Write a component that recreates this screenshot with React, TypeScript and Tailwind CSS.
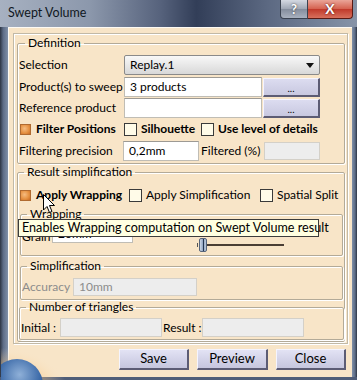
import React from "react";

const beige = "bg-[#f8e5c8]";

function Box({ checked }: { checked?: boolean }) {
  if (checked) {
    return (
      <span className="inline-block w-[11px] h-[11px] shrink-0 border border-[#b06a30] bg-[radial-gradient(circle_at_40%_40%,#f6bc80_0%,#e59040_60%,#c86a24_100%)]" />
    );
  }
  return <span className="inline-block w-[13px] h-[13px] shrink-0 border border-[#3a3a3a] bg-[#fffbe8]" />;
}

function Group({
  title,
  className,
  legendClass,
  children,
}: {
  title: string;
  className?: string;
  legendClass?: string;
  children: React.ReactNode;
}) {
  return (
    <fieldset
      className={
        "border border-[#b3aa98] shadow-[inset_1px_1px_0_#ffffff,1px_1px_0_#ffffff] rounded-[2px] " +
        (className || "")
      }
    >
      <legend className={"px-[3px] leading-[14px] text-[12px] text-black " + (legendClass || "ml-[6px]")}>
        {title}
      </legend>
      {children}
    </fieldset>
  );
}

function Input({ w, value, disabled, h = "h-[20px]" }: { w: string; value?: string; disabled?: boolean; h?: string }) {
  return (
    <div
      className={
        w +
        " " +
        h +
        " shrink-0 flex items-center pl-[5px] border " +
        (disabled
          ? "bg-[#ededed] border-[#d4d0c8] text-[#8c8c8c]"
          : "bg-white border-[#c0bdb5] border-t-[#9d9a94] text-black")
      }
    >
      {value}
    </div>
  );
}

function DotsButton() {
  return (
    <div className="ml-[1px] w-[57px] h-[19px] shrink-0 flex items-center justify-center bg-[linear-gradient(#dcdcf0,#c8c8e0)] border border-[#f4f4ff] border-r-[#5c5c74] border-b-[#5c5c74] border-r-2 border-b-2 text-[10px] leading-none pt-[3px]">
      ...
    </div>
  );
}

function BigButton({ label, w }: { label: string; w: string }) {
  return (
    <div
      className={
        w +
        " h-[21px] flex items-center justify-center bg-[linear-gradient(#e2e2f4,#c6c6de)] border border-[#f4f4ff] border-r-[#5c5c74] border-b-[#5c5c74] border-r-2 border-b-2 text-[13px]"
      }
    >
      {label}
    </div>
  );
}

export default function App() {
  return (
    <div className="w-[357px] h-[380px] relative overflow-hidden font-['Lato',sans-serif] text-[12px] text-black bg-[#4f5d78]">
      {/* Title bar */}
      <div className="h-[27px] flex items-start bg-[linear-gradient(90deg,#a7b1c1_0%,#8c98ac_25%,#56627c_45%,#323e58_55%,#5c6982_75%,#8794a8_100%)]">
        <div className="pl-[8px] pt-[5px] text-[12.5px] leading-[16px] text-[#101822]">Swept Volume</div>
        <div className="ml-auto mr-[4px] flex">
          <div className="w-[28px] h-[19px] flex items-center justify-center rounded-bl-[4px] border border-[#3a4250] border-t-0 bg-[linear-gradient(#d4d9e2,#9ea6b4_50%,#848d9d_51%,#a9b1bf)] text-white font-bold text-[13px] leading-none [text-shadow:0_0_2px_#333]">
            ?
          </div>
          <div className="w-[45px] h-[19px] flex items-center justify-center rounded-br-[4px] border border-[#5a1a14] border-t-0 border-l-0 bg-[linear-gradient(#eaa598,#d4604e_50%,#c0392a_51%,#d8705c)] text-white font-bold text-[14px] leading-none [text-shadow:0_0_2px_#400]">
            X
          </div>
        </div>
      </div>

      <div className="flex h-[350px]">
        <div className="w-[8px] bg-[linear-gradient(90deg,#2c3442,#5d6c86_40%,#8090a8)]" />
        <div className={"w-[344px] relative border-l border-t border-[#fdfaf4] " + beige}>
          {/* globe logo */}
          <div className="absolute left-[-8px] bottom-[-6px] w-[70px] h-[50px] pointer-events-none">
            <svg width="70" height="50" viewBox="0 0 70 50">
              <defs>
                <radialGradient id="glow" cx="0.3" cy="0.8" r="0.7">
                  <stop offset="0" stopColor="#f5a640" stopOpacity="0.9" />
                  <stop offset="0.6" stopColor="#f8c27a" stopOpacity="0.5" />
                  <stop offset="1" stopColor="#f8e5c8" stopOpacity="0" />
                </radialGradient>
                <radialGradient id="globe" cx="0.55" cy="0.3" r="0.8">
                  <stop offset="0" stopColor="#8fb0d8" />
                  <stop offset="0.5" stopColor="#3c6aa8" />
                  <stop offset="1" stopColor="#13305c" />
                </radialGradient>
              </defs>
              <ellipse cx="22" cy="42" rx="46" ry="34" fill="url(#glow)" />
              <circle cx="16" cy="52" r="26" fill="url(#globe)" />
            </svg>
          </div>

          {/* outer panel */}
          <div className="relative ml-[4px] mt-[5px] w-[335px] h-[311px] border border-[#c2b9a6] shadow-[inset_1px_1px_0_#ffffff,1px_1px_0_#ffffff] pl-[3px]">
            <Group title="Definition" className="mt-[2px] w-[328px] pb-[2px] pl-[1px]">
              <div className="flex items-center h-[20px] mt-[5px]">
                <div className="w-[105px] shrink-0">Selection</div>
                <div className="w-[196px] h-[20px] flex items-center pl-[5px] pr-[5px] rounded-[2px] border border-[#8a8a8a] bg-[linear-gradient(#f8f8f8,#e8e8e8_50%,#d8d8d8)]">
                  <span>Replay.1</span>
                  <svg className="ml-auto" width="8" height="5" viewBox="0 0 8 5">
                    <path d="M0 0 L8 0 L4 5 Z" fill="#111" />
                  </svg>
                </div>
              </div>
              <div className="flex items-center h-[20px] mt-[2px]">
                <div className="w-[105px] shrink-0 whitespace-nowrap">Product(s) to sweep</div>
                <Input w="w-[138px]" value="3 products" />
                <DotsButton />
              </div>
              <div className="flex items-center h-[20px] mt-[1px]">
                <div className="w-[105px] shrink-0 whitespace-nowrap">Reference product</div>
                <Input w="w-[138px]" />
                <DotsButton />
              </div>
              <div className="flex items-center h-[16px] mt-[3px] font-bold">
                <div className="w-[105px] shrink-0 flex items-center pl-[1px]">
                  <Box checked />
                  <span className="ml-[5px]">Filter Positions</span>
                </div>
                <div className="w-[77px] shrink-0 flex items-center">
                  <Box />
                  <span className="ml-[4px]">Silhouette</span>
                </div>
                <div className="flex items-center">
                  <Box />
                  <span className="ml-[4px]">Use level of details</span>
                </div>
              </div>
              <div className="flex items-center h-[20px] mt-[4px]">
                <div className="w-[104px] shrink-0">Filtering precision</div>
                <Input w="w-[76px]" value="0,2mm" />
                <div className="w-[65px] shrink-0 pl-[2px]">Filtered (%)</div>
                <Input w="w-[56px]" h="h-[18px]" disabled />
              </div>
            </Group>

            <Group title="Result simplification" className="mt-[1px] w-[328px] pb-[1px]">
              <div className="flex items-center h-[16px] mt-[8px] pl-[2px]">
                <div className="w-[109px] shrink-0 flex items-center font-bold">
                  <Box checked />
                  <span className="ml-[5px]">Apply Wrapping</span>
                </div>
                <div className="w-[131px] shrink-0 flex items-center">
                  <Box />
                  <span className="ml-[4px]">Apply Simplification</span>
                </div>
                <div className="flex items-center">
                  <Box />
                  <span className="ml-[4px]">Spatial Split</span>
                </div>
              </div>

              <Group title="Wrapping" className="ml-[2px] mt-[4px] w-[323px] pb-[1px]" legendClass="ml-[6px]">
                <div className="flex items-start h-[32px] mt-[1px]">
                  <div className="w-[31px] shrink-0 pl-[1px] mt-[6px]">Grain</div>
                  <div className="mt-[3px]">
                    <Input w="w-[81px]" h="h-[18px]" value="20mm" />
                  </div>
                  <div className="ml-[3px] flex flex-col">
                    <div className="mt-[4px] leading-[14px]">Thickness ratio 0.20</div>
                    <div className="ml-[61px] mt-[-2px] flex items-center h-[14px]">
                      <span className="w-[1px] h-[4px] bg-[#555] mr-[1px]" />
                      <span className="w-[8px] h-[14px] rounded-[2px] border border-[#56657c] bg-[linear-gradient(90deg,#d0dae8,#8ea2c0_50%,#b8c6da)] flex justify-center">
                        <span className="w-[1px] h-full bg-[#243650]" />
                      </span>
                      <span className="w-[77px] h-[2px] bg-[#4a3e34]" />
                    </div>
                  </div>
                </div>
              </Group>

              <Group title="Simplification" className="ml-[2px] mt-[3px] w-[323px] pb-[3px]" legendClass="ml-[6px]">
                <div className="flex items-center h-[18px] mt-[5px]">
                  <div className="w-[52px] shrink-0 pl-[1px] text-[#8c8c8c]">Accuracy</div>
                  <Input w="w-[124px]" h="h-[18px]" value="10mm" disabled />
                </div>
              </Group>

              <Group title="Number of triangles" className="ml-[1px] w-[325px] pb-[2px]" legendClass="ml-[6px]">
                <div className="flex items-center h-[19px] mt-[4px]">
                  <div className="w-[40px] shrink-0 pl-[1px]">Initial :</div>
                  <Input w="w-[102px]" h="h-[19px]" disabled />
                  <div className="w-[40px] shrink-0 pl-[1px]">Result :</div>
                  <Input w="w-[102px]" h="h-[19px]" disabled />
                </div>
              </Group>
            </Group>
          </div>

          {/* Bottom buttons */}
          <div className="relative flex justify-end gap-[8px] pr-[6px] mt-[5px]">
            <BigButton label="Save" w="w-[70px]" />
            <BigButton label="Preview" w="w-[71px]" />
            <BigButton label="Close" w="w-[70px]" />
          </div>
        </div>
        <div className="w-[5px] bg-[linear-gradient(90deg,#8090a8,#5d6c86_60%,#2c3442)]" />
      </div>

      {/* Tooltip */}
      <div className="absolute left-[18px] top-[219px] w-[301px] h-[18px] bg-[#ffffe1] border border-[#3c3c3c] flex items-center pl-[3px] text-[12.6px] whitespace-nowrap">
        Enables Wrapping computation on Swept Volume result
      </div>

      {/* Cursor */}
      <svg className="absolute left-[43px] top-[194px]" width="13" height="20" viewBox="0 0 13 20">
        <path d="M0.5 0.5 L0.5 16 L4 12.5 L6.5 18.5 L9 17.5 L6.5 11.5 L11.5 11.5 Z" fill="#fff" stroke="#000" strokeWidth="1" strokeLinejoin="miter" />
      </svg>
    </div>
  );
}
